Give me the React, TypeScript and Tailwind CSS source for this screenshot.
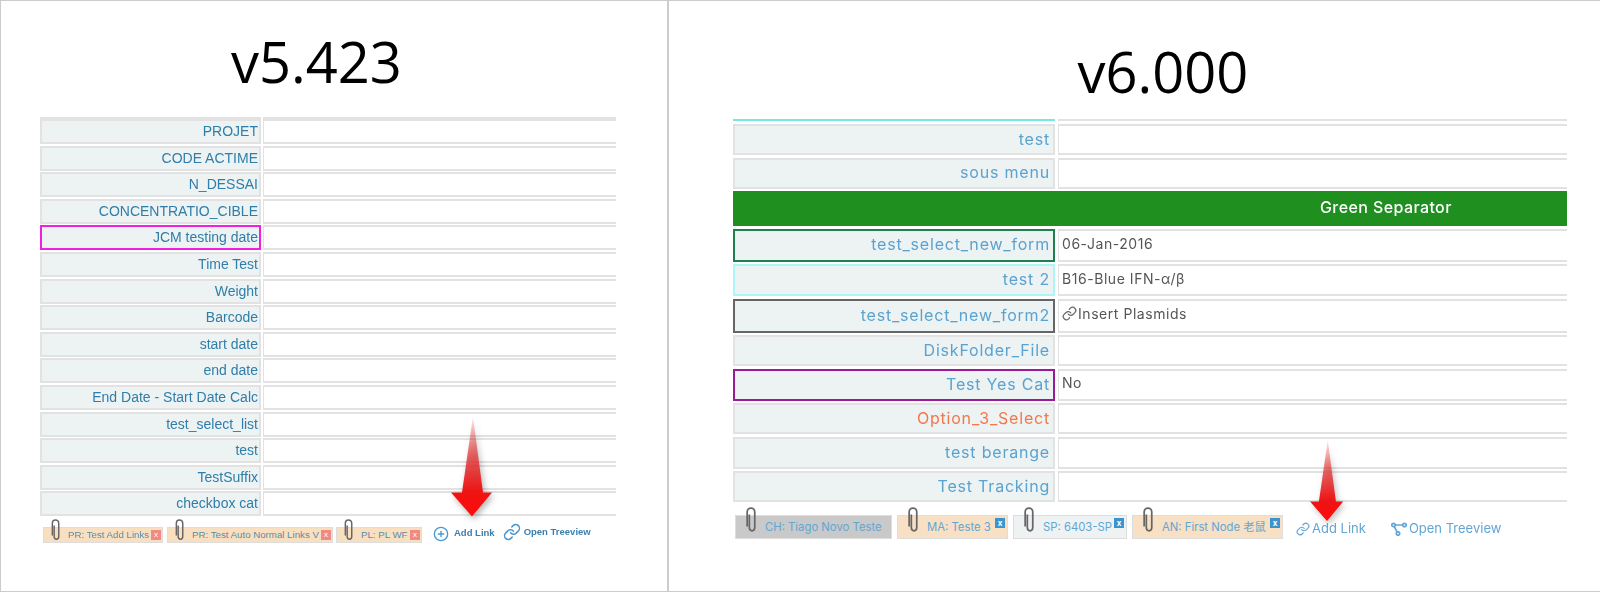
import { CirclePlus, Link } from "lucide-react";

const oldRows = [
  "PROJET",
  "CODE ACTIME",
  "N_DESSAI",
  "CONCENTRATIO_CIBLE",
  "JCM testing date",
  "Time Test",
  "Weight",
  "Barcode",
  "start date",
  "end date",
  "End Date - Start Date Calc",
  "test_select_list",
  "test",
  "TestSuffix",
  "checkbox cat",
];

const newRows = [
  { label: "test", h: "h-[31px]", box: "border-[#e2e2e2]" },
  { label: "sous menu", h: "h-[31px]", box: "border-[#e2e2e2]" },
  { label: "Green Separator", h: "h-[35px]", box: "" },
  { label: "test_select_new_form", value: "06-Jan-2016", h: "h-[33px]", box: "border-[#1f7f4f]" },
  { label: "test 2", value: "B16-Blue IFN-α/β", h: "h-[32px]", box: "border-[#aef5f7]" },
  { label: "test_select_new_form2", value: "Insert Plasmids", icon: true, h: "h-[34px]", box: "border-[#666666]" },
  { label: "DiskFolder_File", h: "h-[31px]", box: "border-[#e2e2e2]" },
  { label: "Test Yes Cat", value: "No", h: "h-[32px]", box: "border-[#9a1a9a]" },
  { label: "Option_3_Select", orange: true, h: "h-[31px]", box: "border-[#e2e2e2]" },
  { label: "test berange", h: "h-[32px]", box: "border-[#e2e2e2]" },
  { label: "Test Tracking", h: "h-[31px]", box: "border-[#e2e2e2]" },
];

function Clip({ className }: { className: string }) {
  return (
    <svg viewBox="0 0 10 24" fill="none" stroke="#666666" strokeWidth="1.6" className={className}>
      <path d="M3 7V19a2.5 3 0 0 0 5 0V4.5a3.5 3.5 0 0 0-7 0V18" />
    </svg>
  );
}

function Arrow({ className, id }: { className: string; id: string }) {
  return (
    <svg viewBox="0 0 42 100" className={className}>
      <defs>
        <linearGradient id={id} x1="0" y1="0" x2="0" y2="1">
          <stop offset="0" stopColor="#e83030" stopOpacity="0.1" />
          <stop offset="0.4" stopColor="#e23a3a" stopOpacity="0.8" />
          <stop offset="0.75" stopColor="#ee1414" />
          <stop offset="1" stopColor="#ff0a0a" />
        </linearGradient>
      </defs>
      <path d="M22 0L32 76H41L21 100L0 76H11Z" fill={`url(#${id})`} />
    </svg>
  );
}

function TreeIcon() {
  return (
    <svg viewBox="0 0 16 14" fill="none" stroke="#62a6d4" strokeWidth="1.7" className="h-[14px] w-[16px]">
      <circle cx="2.5" cy="3" r="1.7" />
      <circle cx="13.5" cy="3" r="1.7" />
      <circle cx="7" cy="11.5" r="1.7" />
      <path d="M4.2 3H11.8M3.3 4.6L6 9.9" />
    </svg>
  );
}

function OldChip({ text, w }: { text: string; w: string }) {
  return (
    <div className={`relative flex h-4 items-center justify-between whitespace-nowrap border border-[#dddddd] bg-[#f8dfc0] pl-6 pr-[1px] text-[9.7px] text-[#5b8cab] ${w}`}>
      <Clip className="absolute left-[7px] top-[-9px] h-[22px] w-[10px]" />
      <span>{text}</span>
      <span className="flex h-[10px] w-[10px] items-center justify-center bg-[#f28a84] text-[8px] leading-none text-white">x</span>
    </div>
  );
}

function NewChip({ text, w, bg, close = true }: { text: string; w: string; bg: string; close?: boolean }) {
  return (
    <div className={`relative flex h-6 items-center justify-between border border-[#dddddd] pl-[29px] pr-[2px] text-[11.3px] text-[#62a6d4] ${w} ${bg}`}>
      <Clip className="absolute left-[10px] top-[-9px] h-[26px] w-[11px]" />
      <span className="whitespace-nowrap">{text}</span>
      {close && (
        <span className="mb-[9px] flex h-[10px] w-[10px] items-center justify-center bg-[#3a94cf] text-[8px] font-bold leading-none text-white">x</span>
      )}
    </div>
  );
}

export default function App() {
  return (
    <div className="flex h-[593px] w-[1600px] overflow-hidden bg-white">
      <div className="relative h-[592px] w-[668px] shrink-0 border border-[#cccccc] pl-[39px] font-['Liberation_Sans',sans-serif] blur-[0.4px]">
        <div className="w-[576px]">
          <div className="flex h-[116px] items-start justify-center pr-[23px] pt-[23px] font-['Open_Sans',sans-serif] text-[56px] leading-[75px] text-black">
            v5.423
          </div>
          <div className="flex gap-[2px]">
            <div className="h-[2px] w-[221px] bg-[#e2e2e2]" />
            <div className="h-[2px] flex-1 bg-[#e2e2e2]" />
          </div>
          <div className="flex flex-col gap-[1.6px]">
            {oldRows.map((label) => (
              <div key={label} className="flex h-[25px] gap-[2px]">
                <div
                  className={`flex w-[221px] items-center justify-end border-2 bg-[#edf2f3] pr-[1px] text-[14px] text-[#2f7ea9] ${
                    label === "JCM testing date" ? "border-[#f020e0]" : "border-[#e2e2e2]"
                  }`}
                >
                  {label}
                </div>
                <div className="flex-1 border-y-2 border-l border-[#e2e2e2] bg-white" />
              </div>
            ))}
          </div>
          <div className="mt-[11px] flex items-start pl-[3px]">
            <OldChip text="PR: Test Add Links" w="w-[120px]" />
            <OldChip text="PR: Test Auto Normal Links V" w="ml-[4px] w-[166px]" />
            <OldChip text="PL: PL WF" w="ml-[3px] w-[86px]" />
            <div className="ml-[11px] mt-[-4px] flex items-center gap-[5px] whitespace-nowrap text-[9.5px] font-bold text-[#3b7fae]">
              <CirclePlus className="mt-[3px] h-[16px] w-[16px] text-[#4a98d2]" />
              Add Link
            </div>
            <div className="ml-[8px] mt-[-4px] flex items-center gap-[3px] whitespace-nowrap text-[9.5px] font-bold text-[#3b7fae]">
              <Link className="h-[18px] w-[18px] text-[#4a98d2]" />
              Open Treeview
            </div>
          </div>
        </div>
        <Arrow id="arrow-old" className="absolute left-[450px] top-[415px] h-[101px] w-[42px] drop-shadow-[2px_3px_3px_rgba(0,0,0,0.3)]" />
      </div>

      <div className="relative h-[592px] flex-1 border-y border-l border-[#cccccc] pl-[64px] font-['Inter',sans-serif] blur-[0.4px]">
        <div className="w-[834px]">
          <div className="flex h-[118px] items-start justify-center pl-[26px] pt-[33px] font-['Open_Sans',sans-serif] text-[56px] leading-[75px] text-black">
            v6.000
          </div>
          <div className="flex gap-[3px]">
            <div className="h-[2px] w-[322px] bg-[#74e8e2]" />
            <div className="h-[2px] flex-1 bg-[#e2e2e2]" />
          </div>
          <div className="mt-[3px] flex flex-col gap-[2.5px]">
            {newRows.map((row) =>
              row.label === "Green Separator" ? (
                <div key={row.label} className={`flex items-center bg-[#1f8f20] pb-[3px] pl-[587px] text-[16px] font-medium tracking-[0.4px] text-white ${row.h}`}>
                  {row.label}
                </div>
              ) : (
                <div key={row.label} className={`flex gap-[3px] ${row.h}`}>
                  <div
                    className={`flex w-[322px] items-center justify-end border-2 bg-[#edf2f3] pb-[2px] pr-[3px] text-[16px] tracking-[0.8px] ${row.box} ${
                      row.orange ? "text-[#f4774c]" : "text-[#5aa3d0]"
                    }`}
                  >
                    {row.label}
                  </div>
                  <div className="flex flex-1 items-center gap-[1px] border-y-2 border-l border-[#e2e2e2] bg-white pb-[4px] pl-[3px] text-[14px] tracking-[0.55px] text-[#555555]">
                    {row.icon && <Link className="h-[15px] w-[15px] text-[#666666]" />}
                    {row.value}
                  </div>
                </div>
              )
            )}
          </div>
          <div className="mt-[13px] flex items-start pl-[2px]">
            <NewChip text="CH: Tiago Novo Teste" w="w-[157px]" bg="bg-[#c9c9c9]" close={false} />
            <NewChip text="MA: Teste 3" w="ml-[5px] w-[111px]" bg="bg-[#f7e0c4]" />
            <NewChip text="SP: 6403-SP" w="ml-[5px] w-[114px]" bg="bg-[#eef2f3]" />
            <NewChip text="AN: First Node 老鼠" w="ml-[5px] w-[151px] font-['Inter','Noto_Sans_CJK_SC',sans-serif]" bg="bg-[#f7e0c4]" />
            <div className="ml-[13px] mt-[4px] flex items-center gap-[2px] whitespace-nowrap text-[13px] text-[#62a6d4]">
              <Link className="h-[14px] w-[14px]" />
              Add Link
            </div>
            <div className="ml-[25px] mt-[4px] flex items-center gap-[2px] whitespace-nowrap text-[13px] text-[#62a6d4]">
              <TreeIcon />
              Open Treeview
            </div>
          </div>
        </div>
        <Arrow id="arrow-new" className="absolute left-[641px] top-[439px] h-[81px] w-[34px] drop-shadow-[2px_3px_3px_rgba(0,0,0,0.25)]" />
      </div>
    </div>
  );
}
